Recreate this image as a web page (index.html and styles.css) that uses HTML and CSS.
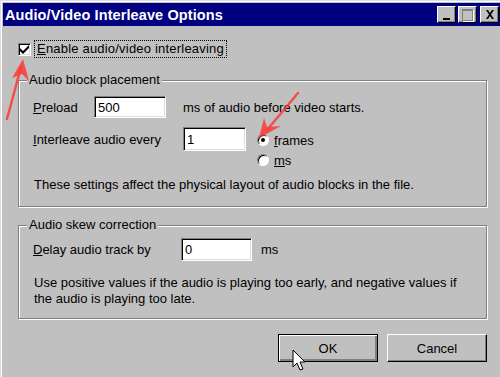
FILE: index.html
```html
<!DOCTYPE html>
<html lang="en">
<head>
  <meta charset="UTF-8">
  <title>Audio/Video Interleave Options</title>
  <link rel="stylesheet" href="styles.css">
</head>
<body>
  <div class="window">
    <div class="titlebar">
      <span class="title">Audio/Video Interleave Options</span>
      <div class="title-buttons">
        <span class="tbtn"><span class="min-glyph"></span></span>
        <span class="tbtn"><span class="max-glyph"></span></span>
        <span class="tbtn close"><svg width="10" height="9" viewBox="0 0 10 9"><path d="M1 0h2l2 3 2-3h2L6 4.5 9 9H7L5 6 3 9H1l3-4.5z" fill="#000"/></svg></span>
      </div>
    </div>

    <div class="content">
      <div class="check-row">
        <span class="checkbox"><svg width="9" height="9" viewBox="0 0 9 9"><path d="M0 3v3l3 3 6-6V0L3 6z" fill="#000"/></svg></span>
        <span class="focus-label"><u>E</u>nable audio/video interleaving</span>
      </div>

      <div class="group group-placement">
        <span class="caption">Audio block placement</span>
        <div class="row">
          <span class="label label-preload"><u>P</u>reload</span>
          <span class="field field-preload">500</span>
          <span class="after">ms of audio before video starts.</span>
        </div>
        <div class="row row-interleave">
          <span class="label label-wide"><u>I</u>nterleave audio every</span>
          <span class="field field-interleave">1</span>
          <div class="radios">
            <div class="radio-row"><span class="radio checked"></span><span><u>f</u>rames</span></div>
            <div class="radio-row"><span class="radio"></span><span><u>m</u>s</span></div>
          </div>
        </div>
        <p class="note">These settings affect the physical layout of audio blocks in the file.</p>
      </div>

      <div class="group group-skew">
        <span class="caption">Audio skew correction</span>
        <div class="row">
          <span class="label label-delay"><u>D</u>elay audio track by</span>
          <span class="field field-delay">0</span>
          <span class="after after-ms">ms</span>
        </div>
        <p class="note note-skew">Use positive values if the audio is playing too early, and negative values if<br>the audio is playing too late.</p>
      </div>

      <div class="buttons">
        <span class="button default">OK</span>
        <span class="button">Cancel</span>
      </div>
    </div>

    <!-- annotation arrows and mouse pointer drawn over the dialog -->
    <svg class="overlay" width="500" height="377" viewBox="0 0 500 377">
      <g stroke="#ff3a3a" stroke-width="2.5" stroke-linecap="round" fill="none" opacity="0.85">
        <path d="M6 118 L20 66"/>
        <path d="M297 92 L266 129"/>
      </g>
      <g fill="#ff3a3a" opacity="0.85">
        <path d="M22 58 L28 80 L21 73 L11 77 Z"/>
        <path d="M258 137 L263 117 L266 126 L280 125 Z"/>
      </g>
      <path d="M292 349 V366 L296 362 L299 369 L302 368 L299 361 L304 361 Z" fill="#fff" stroke="#000" stroke-width="1"/>
    </svg>
  </div>
</body>
</html>
```

FILE: styles.css
```css
body {
  margin: 0;
  padding: 0;
  background-color: #c0c0c0;
  font-family: "Liberation Sans", Arial, sans-serif;
  font-size: 13px;
  color: #000;
}

.window {
  position: relative;
  width: 500px;
  height: 377px;
  box-sizing: border-box;
  background-color: #c0c0c0;
  border-top: 1px solid #dfdfdf;
  border-left: 1px solid #dfdfdf;
  box-shadow: inset 1px 1px #fff;
  padding: 2px 0 0 2px;
  overflow: hidden;
}

.titlebar {
  height: 23px;
  background-color: #000080;
  display: flex;
  align-items: center;
  justify-content: space-between;
  padding: 0 1px 0 2px;
}

.title {
  color: #fff;
  font-weight: bold;
  font-size: 14.5px;
  letter-spacing: 0.1px;
}

.title-buttons {
  display: flex;
  gap: 2px;
}

.tbtn {
  width: 19px;
  height: 17px;
  box-sizing: border-box;
  background-color: #c0c0c0;
  border-top: 1px solid #fff;
  border-left: 1px solid #fff;
  border-right: 1px solid #000;
  border-bottom: 1px solid #000;
  box-shadow: inset -1px -1px #808080;
  display: flex;
  align-items: center;
  justify-content: center;
}

.tbtn.close {
  margin-left: 1px;
}

.min-glyph {
  width: 7px;
  height: 2px;
  background-color: #000;
  margin-top: 8px;
}

.max-glyph {
  width: 9px;
  height: 9px;
  border: 1px solid #808080;
  border-top-width: 2px;
  box-shadow: 1px 1px #fff;
}

.content {
  padding: 0 12px 0 15px;
}

.check-row {
  display: flex;
  align-items: center;
  margin-top: 14px;
  height: 18px;
}

.checkbox {
  width: 13px;
  height: 13px;
  box-sizing: border-box;
  background-color: #fff;
  border-top: 1px solid #808080;
  border-left: 1px solid #808080;
  border-right: 1px solid #fff;
  border-bottom: 1px solid #fff;
  box-shadow: inset 1px 1px #000, inset -1px -1px #dfdfdf;
  display: flex;
  align-items: center;
  justify-content: center;
}

.focus-label {
  margin-left: 3px;
  padding: 0 2px;
  line-height: 16px;
  letter-spacing: 0.2px;
  border: 1px dotted #000;
}

.group {
  position: relative;
  border: 1px solid #808080;
  box-shadow: inset 1px 1px #fff, 1px 1px #fff;
  margin-right: 1px;
}

.caption {
  position: absolute;
  left: 8px;
  top: -9px;
  padding: 0 2px;
  line-height: 16px;
  background-color: #c0c0c0;
}

.group-placement {
  margin-top: 22px;
  padding: 15px 14px 13px 14px;
}

.group-skew {
  margin-top: 18px;
  padding: 12px 14px 11px 14px;
}

.row {
  display: flex;
  align-items: center;
}

.row-interleave {
  align-items: flex-start;
  margin-top: 9px;
}

.row-interleave .label {
  line-height: 26px;
}

.label-preload {
  width: 61px;
}

.label-wide {
  width: 150px;
}

.label-delay {
  width: 148px;
}

.field {
  box-sizing: border-box;
  background-color: #fff;
  border-top: 1px solid #808080;
  border-left: 1px solid #808080;
  border-right: 1px solid #fff;
  border-bottom: 1px solid #fff;
  box-shadow: inset 1px 1px #000, inset -1px -1px #dfdfdf;
  padding: 0 3px;
  display: flex;
  align-items: center;
}

.field-preload {
  width: 72px;
  height: 22px;
}

.field-interleave {
  width: 63px;
  height: 24px;
}

.field-delay {
  width: 71px;
  height: 23px;
}

.after {
  margin-left: 17px;
}

.after-ms {
  margin-left: 9px;
}

.radios {
  margin-left: 11px;
  margin-top: 3px;
}

.radio-row {
  display: flex;
  align-items: center;
  height: 20px;
  gap: 5px;
}

.radio {
  width: 12px;
  height: 12px;
  box-sizing: border-box;
  border-radius: 50%;
  background-color: #fff;
  border: 1px solid;
  border-color: #808080 #fff #fff #808080;
  box-shadow: inset 1px 1px #000;
  display: flex;
  align-items: center;
  justify-content: center;
}

.radio.checked::after {
  content: "";
  width: 4px;
  height: 4px;
  border-radius: 50%;
  background-color: #000;
}

.note {
  margin: 7px 0 0 1px;
  line-height: 16px;
}

.note-skew {
  margin-top: 14px;
}

.buttons {
  display: flex;
  justify-content: flex-end;
  gap: 9px;
  margin-top: 15px;
  margin-right: 1px;
}

.button {
  width: 100px;
  height: 28px;
  box-sizing: border-box;
  background-color: #c0c0c0;
  border-top: 1px solid #fff;
  border-left: 1px solid #fff;
  border-right: 1px solid #000;
  border-bottom: 1px solid #000;
  box-shadow: inset -1px -1px #808080;
  display: flex;
  align-items: center;
  justify-content: center;
}

.button.default {
  border: 1px solid #000;
  box-shadow: inset 1px 1px #fff, inset -1px -1px #808080, inset -2px -2px #808080;
}

.overlay {
  position: absolute;
  left: 0;
  top: 0;
}
```
